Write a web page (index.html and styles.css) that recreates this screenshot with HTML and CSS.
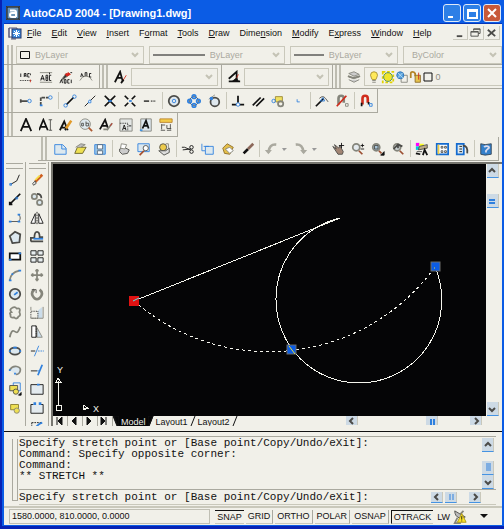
FILE: index.html
```
<!DOCTYPE html>
<html lang="en">
<head>
  <meta charset="UTF-8" />
  <meta name="viewport" content="width=device-width, initial-scale=1.0" />
  <title>AutoCAD 2004 - [Drawing1.dwg]</title>
  <link rel="stylesheet" href="styles.css">
</head>
<body>
  <div class="window">
    <header class="titlebar">
      <svg class="app-logo" viewBox="0 0 14 14"><rect width="14" height="14" fill="#d9e4ee"/><rect x="1" y="1" width="12" height="12" fill="#6d96b8"/><path d="M4 4.5h4q2 0 2 2V11M10 7H6Q4 7 4 9t2 2h4" stroke="#fff" stroke-width="2"/></svg>
      <h1>AutoCAD 2004 - [Drawing1.dwg]</h1>
      <div class="window-buttons">
        <button aria-label="Minimize"><svg viewBox="0 0 16 16"><path d="M4 12h5" stroke="#fff" stroke-width="2"/></svg></button>
        <button aria-label="Maximize"><svg viewBox="0 0 16 16"><path d="M4 5h9v8H4zM4 6h9" stroke="#fff" stroke-width="2"/></svg></button>
        <button class="close" aria-label="Close"><svg viewBox="0 0 16 16"><path d="M4 4l8 8M12 4l-8 8" stroke="#fff" stroke-width="2"/></svg></button>
      </div>
    </header>

    <div class="client">
      <nav class="menubar">
        <svg class="doc-icon" viewBox="0 0 14 14"><path d="M1 2h8v9H1z" fill="#fff" stroke="#557"/><path d="M1 2v10M3 13h5" stroke="#557"/><rect x="4" y="3" width="9" height="9" fill="#3d8ce0" stroke="#236"/><path d="M8.500 4v7M5 7.500h7M6 5l5 5M11 5l-5 5" stroke="#fff"/></svg>
        <button><u>F</u>ile</button>
        <button><u>E</u>dit</button>
        <button><u>V</u>iew</button>
        <button><u>I</u>nsert</button>
        <button>F<u>o</u>rmat</button>
        <button><u>T</u>ools</button>
        <button><u>D</u>raw</button>
        <button>Dime<u>n</u>sion</button>
        <button><u>M</u>odify</button>
        <button>E<u>x</u>press</button>
        <button><u>W</u>indow</button>
        <button><u>H</u>elp</button>
        <div class="doc-buttons">
          <button aria-label="Minimize drawing"><svg viewBox="0 0 12 12"><path d="M3 10h6" class="dk w2"/></svg></button>
          <button aria-label="Restore drawing"><svg viewBox="0 0 12 12"><path d="M4 4V2h7v5H9M1 5h8v5H1zM4 2.500h7M1 5.500h8" class="dk"/></svg></button>
          <button aria-label="Close drawing"><svg viewBox="0 0 12 12"><path d="M2 3l8 7M10 3l-8 7" class="dk w2"/></svg></button>
        </div>
      </nav>

      <!-- object properties -->
      <div class="toolbar properties">
        <span class="grip"></span>
        <div class="combo combo-color">
          <svg class="swatch" viewBox="0 0 10 8"><path d="M.5.5h9v7h-9z"/></svg>
          <select aria-label="Color"><option>ByLayer</option></select>
          <svg class="chevron" viewBox="0 0 8 6"><path d="M1 1l3 3 3-3"/></svg>
        </div>
        <div class="combo combo-linetype">
          <svg class="line-long" viewBox="0 0 52 2" preserveAspectRatio="none"><path d="M0 1h52"/></svg>
          <select aria-label="Linetype"><option>ByLayer</option></select>
          <svg class="chevron" viewBox="0 0 8 6"><path d="M1 1l3 3 3-3"/></svg>
        </div>
        <div class="combo combo-weight">
          <svg class="line-short" viewBox="0 0 30 2" preserveAspectRatio="none"><path d="M0 1h30"/></svg>
          <select aria-label="Lineweight"><option>ByLayer</option></select>
          <svg class="chevron" viewBox="0 0 8 6"><path d="M1 1l3 3 3-3"/></svg>
        </div>
        <div class="combo combo-plot">
          <select aria-label="Plot style"><option>ByColor</option></select>
          <svg class="chevron" viewBox="0 0 8 6"><path d="M1 1l3 3 3-3"/></svg>
        </div>
      </div>

      <!-- express text, styles, layers -->
      <div class="toolbar styles">
        <span class="grip"></span>
        <button class="tool" aria-label="Arc aligned text"><svg viewBox="0 0 16 16"><path d="M2 4v4M6 8V4h2v4M6 6h2M12 4h-2v4h2M13 4v2" /><path d="M1 12h14" stroke-dasharray="1 1"/><path d="M13 11v3" class="r"/></svg></button>
        <button class="tool" aria-label="Text fit"><svg viewBox="0 0 16 16"><path d="M1 3h14M1 14h14" class="g"/><path d="M2 12l2-6 2 6M2 10h4M8 6v6h2V6zM8 9h2M14 6h-2v6h2M12 3v2"/></svg></button>
        <button class="tool" aria-label="Text mask"><svg viewBox="0 0 16 16"><path d="M2 12l6-8 3 2-5 4z" class="g" fill="#333"/><path d="M7 5l4-2 2 2-4 2z" class="r" fill="#d22"/><path d="M1 15l2-4 1 4M6 11v4h2v-4zM12 11h-2v4h2M14 11v4M13 3h2"/></svg></button>
        <button class="tool" aria-label="Explode text"><svg viewBox="0 0 16 16"><path d="M1 12l3-4 4-1 4 1 3 4" class="g"/><path d="M2 8l1-4 2 4M7 7V3h2v4M14 4h-2v4h2"/></svg></button>
        <span class="edge"></span>
        <span class="grip"></span>
        <button class="tool" aria-label="Text style"><svg viewBox="0 0 16 16"><path d="M1 14L7 2l3 11M3 9h6" class="w2"/><path d="M9 14l5-8" class="r"/><path d="M8 15l3-4" class="w2"/></svg></button>
        <div class="combo combo-text">
          <select aria-label="Text style"></select>
          <svg class="chevron" viewBox="0 0 8 6"><path d="M1 1l3 3 3-3"/></svg>
        </div>
        <span class="edge"></span>
        <button class="tool" aria-label="Dimension style"><svg viewBox="0 0 16 16"><path d="M2 10l9-8v8M2 13h13" class="w2"/><path d="M9 13l4-8" class="r"/><path d="M6 13l5-4 2 4z" fill="#111"/></svg></button>
        <div class="combo combo-dim">
          <select aria-label="Dimension style"></select>
          <svg class="chevron" viewBox="0 0 8 6"><path d="M1 1l3 3 3-3"/></svg>
        </div>
        <span class="edge"></span>
        <span class="grip"></span>
        <button class="tool" aria-label="Layers"><svg viewBox="0 0 16 16"><path d="M2 4l6-2 6 3-6 2zM2 8l6 2 6-2M2 11l6 3 6-3" class="g" fill="#ccc"/><path d="M1 7l6 2 8-2" class="g w2"/></svg></button>
        <div class="layer-state">
          <svg viewBox="0 0 16 16"><path d="M5 9Q3 6 5 3q3-2 6 0 2 3 0 6l-1 2H6z" fill="#ffe95a" stroke="#a58c25"/><path d="M6 12h4M6 14h4" class="g"/></svg>
          <svg viewBox="0 0 16 16"><path d="M2 2h12v12H2z" stroke="#e2d100" stroke-dasharray="3 2" stroke-width="2"/><circle cx="8" cy="8" r="5" fill="#efe52c" stroke="#486"/></svg>
          <svg viewBox="0 0 16 16"><path d="M7 6h7v8H7z" class="g"/><circle cx="6" cy="6" r="4" fill="#5aa3df" stroke="#276eb4"/><path d="M3 3l6 6M9 3L3 9" stroke="#bde"/></svg>
          <svg viewBox="0 0 16 16"><path d="M2 9V4q0-2 2-2t3 2v3" stroke="#b48428" stroke-width="2"/><path d="M7 6h6v8H7z" fill="#e7c34c" stroke="#8a6a28"/><path d="M11 3v8" class="r"/></svg>
          <svg class="swatch" viewBox="0 0 10 10"><path d="M1 1h8v8H1z"/></svg>
          <span>0</span>
        </div>
      </div>

      <!-- object snap -->
      <div class="toolbar snaps">
        <span class="grip"></span>
        <button class="tool" aria-label="Temporary track point"><svg viewBox="0 0 16 16"><path d="M1 8h9M2 6v4" class="dk w2"/><circle cx="12" cy="8" r="2" class="b"/></svg></button>
        <button class="tool" aria-label="Snap from"><svg viewBox="0 0 16 16"><path d="M2 13V4h9" class="dk w2" stroke-dasharray="4 1"/><circle cx="13" cy="4" r="2" class="b"/><path d="M1 13h3" class="b w2"/></svg></button>
        <span class="sep"></span>
        <button class="tool" aria-label="Endpoint"><svg viewBox="0 0 16 16"><path d="M4 12l8-8" class="w2"/><circle cx="3" cy="13" r="2" class="b"/><circle cx="13" cy="3" r="2" class="b"/></svg></button>
        <button class="tool" aria-label="Midpoint"><svg viewBox="0 0 16 16"><path d="M2 14L14 2"/><path d="M7 7h2v3H6z" class="b" fill="#fff"/></svg></button>
        <button class="tool" aria-label="Intersection"><svg viewBox="0 0 16 16"><path d="M2 2l5 5v2l-5 5M14 2L9 7v2l5 5" class="w2"/><path d="M6 8h4" class="b w2"/></svg></button>
        <button class="tool" aria-label="Apparent intersection"><svg viewBox="0 0 16 16"><path d="M2 2l4 4M14 2l-4 4M2 14l4-4M10 10l4 4" class="w2"/><path d="M7 8h3" class="b w2"/></svg></button>
        <button class="tool" aria-label="Extension"><svg viewBox="0 0 16 16"><path d="M1 8h6M9 8h1M11 8h1M13 8h1" class="dk w2"/></svg></button>
        <span class="sep"></span>
        <button class="tool" aria-label="Center"><svg viewBox="0 0 16 16"><circle cx="8" cy="8" r="6" fill="#dfe8ee" class="w2 dk"/><circle cx="8" cy="8" r="2" class="b"/></svg></button>
        <button class="tool" aria-label="Quadrant"><svg viewBox="0 0 16 16"><circle cx="8" cy="8" r="5" class="dk"/><circle cx="8" cy="3" r="2" class="b w2"/><circle cx="3" cy="8" r="2" class="b w2"/><circle cx="13" cy="8" r="2" class="b w2"/><circle cx="8" cy="13" r="2" class="b w2"/></svg></button>
        <button class="tool" aria-label="Tangent"><svg viewBox="0 0 16 16"><circle cx="9" cy="9" r="5" fill="#dfe8ee" class="w2 dk"/><path d="M2 6l7-5" class="g"/><circle cx="5" cy="5" r="1" class="b w2"/></svg></button>
        <span class="sep"></span>
        <button class="tool" aria-label="Perpendicular"><svg viewBox="0 0 16 16"><path d="M8 2v8M1 12h14" class="w2"/><circle cx="8" cy="12" r="2" class="b" fill="#fff"/></svg></button>
        <button class="tool" aria-label="Parallel"><svg viewBox="0 0 16 16"><path d="M2 13l9-9M6 14l9-9" class="w2"/></svg></button>
        <button class="tool" aria-label="Insert point"><svg viewBox="0 0 16 16"><path d="M5 3h8v6H5z" fill="#f0e060" stroke="#998833"/><circle cx="3" cy="8" r="2" class="b"/><circle cx="11" cy="11" r="3" class="g w2"/></svg></button>
        <button class="tool" aria-label="Node"><svg viewBox="0 0 16 16"><path d="M7 6v3h3" class="b"/></svg></button>
        <span class="sep"></span>
        <button class="tool" aria-label="Nearest"><svg viewBox="0 0 16 16"><path d="M1 14l9-9" class="w2"/><path d="M5 5q4-4 7 0t3 4" class="dk"/><path d="M6 8h5l-2-4z" class="b"/></svg></button>
        <button class="tool" aria-label="Snap to none"><svg viewBox="0 0 16 16"><path d="M4 12V5q0-3 3-3t3 3v5" class="g w3"/><path d="M2 14L13 2" class="r w2"/><path d="M12 11h3v3h-3z" class="g"/></svg></button>
        <span class="sep"></span>
        <button class="tool" aria-label="Osnap settings"><svg viewBox="0 0 16 16"><path d="M4 12V5q0-3 3-3t3 3v5" class="r w3"/><path d="M3 10v4M11 9v3" class="w2"/><path d="M12 11h3v3h-3z" class="b"/></svg></button>
        <span class="edge"></span>
      </div>

      <!-- text -->
      <div class="toolbar text-tools">
        <span class="grip"></span>
        <button class="tool" aria-label="Multiline text"><svg viewBox="0 0 16 16"><path d="M2 15L8 1l6 14M4 10h8" class="w2"/></svg></button>
        <button class="tool" aria-label="Single line text"><svg viewBox="0 0 16 16"><path d="M0 14L5 2l5 12M2 10h6" class="w2"/><path d="M11 2h4M13 2v12M11 14h4" class="dk"/></svg></button>
        <button class="tool" aria-label="Edit text"><svg viewBox="0 0 16 16"><path d="M1 14L6 4l4 10M3 11h6" class="w2"/><path d="M8 12l6-9" stroke="#e29a28" stroke-width="3"/><path d="M7 14l1-2" class="w2"/></svg></button>
        <button class="tool" aria-label="Find and replace"><svg viewBox="0 0 16 16"><circle cx="7" cy="7" r="6" fill="#dfe8ee" class="g"/><path d="M3 6h2v3H3zM8 4v5h3V6H8" class="dk"/><path d="M11 11l4 4" stroke="#ad5a32" stroke-width="2"/></svg></button>
        <button class="tool" aria-label="Text style manager"><svg viewBox="0 0 16 16"><path d="M1 13L7 2l3 9M3 9h6" class="w2"/><path d="M9 14l6-8M5 13h4" class="g w2"/><path d="M13 9l2-3" class="r"/></svg></button>
        <button class="tool" aria-label="Scale text"><svg viewBox="0 0 16 16"><path d="M1 1h14v14H1z" class="g" fill="#e3e6e4"/><path d="M1 6h9v9" stroke-dasharray="1 1"/><path d="M4 14l2-6 2 6M5 12h3M11 9h3"/></svg></button>
        <button class="tool" aria-label="Justify text"><svg viewBox="0 0 16 16"><path d="M2 1h12v14H2z" class="g" fill="#dce5ec"/><path d="M4 12l4-9 3 9M6 9h4" class="w2"/><path d="M1 13h3v2H1z" fill="#4593dd" stroke="none"/></svg></button>
        <button class="tool" aria-label="Convert distance"><svg viewBox="0 0 16 16"><path d="M1 1h14v4H1z" fill="#f3cb48" stroke="#b9822d"/><path d="M3 7v6M13 7v6M3 8h4M9 8v4h5M2 14h5M9 14h5" class="dk"/></svg></button>
        <span class="edge"></span>
      </div>

      <!-- standard -->
      <div class="toolbar standard">
        <span class="grip"></span>
        <button class="tool" aria-label="New"><svg viewBox="0 0 16 16"><path d="M2 3h9l4 4v7H2z" fill="#dce8ef" class="b"/><path d="M10 3v5h5" class="b"/></svg></button>
        <button class="tool" aria-label="Open"><svg viewBox="0 0 16 16"><path d="M2 13l3-7h10l-4 7z" fill="#eee052" stroke="#655e28"/><path d="M3 6l6-4 5 1-5 3" fill="#bbb" class="g"/></svg></button>
        <button class="tool" aria-label="Save"><svg viewBox="0 0 16 16"><path d="M2 3h12v11H2z" fill="#9bc8ec" class="b"/><path d="M5 3h6v5H5zM5 10h6v4H5z" fill="#fff" stroke="#567"/></svg></button>
        <span class="sep"></span>
        <button class="tool" aria-label="Plot"><svg viewBox="0 0 16 16"><path d="M3 8l5-2 6 3-2 4-6 1-3-3z" fill="#ccc" class="dk"/><path d="M5 2l6 1-2 5-5-1z" fill="#fff" class="g"/></svg></button>
        <button class="tool" aria-label="Plot preview"><svg viewBox="0 0 16 16"><path d="M1 2h13v9H1z" fill="#dce8ef" class="b"/><circle cx="10" cy="7" r="3" fill="#fff" class="dk"/><path d="M8 10l-5 5" stroke="#a64e2b" stroke-width="2"/></svg></button>
        <button class="tool" aria-label="Publish"><svg viewBox="0 0 16 16"><circle cx="7" cy="6" r="4" fill="#edcb4d" class="dk"/><path d="M2 10h8l4-3v5l-6 3z" fill="#ddd" class="dk"/><path d="M10 2h3v5" class="g"/></svg></button>
        <span class="sep"></span>
        <button class="tool" aria-label="Cut"><svg viewBox="0 0 16 16"><path d="M1 6h3l7 3M2 9l9-1"/><circle cx="12" cy="6" r="2"/><circle cx="12" cy="11" r="2"/></svg></button>
        <button class="tool" aria-label="Copy"><svg viewBox="0 0 16 16"><path d="M1 10V2M1 10h4V5h9v9H5v-4M3 5h6" class="b" fill="#dce8ef"/></svg></button>
        <button class="tool" aria-label="Paste"><svg viewBox="0 0 16 16"><path d="M2 7l5-5 7 4-4 8-6-1z" fill="#e4bf4a" stroke="#8a6a28"/><path d="M5 8l5-2 4 4-4 3z" fill="#fff" class="g"/></svg></button>
        <button class="tool" aria-label="Match properties"><svg viewBox="0 0 16 16"><path d="M3 13l5-5" class="w3"/><path d="M8 8l6-6" stroke="#8c685a" stroke-width="3"/></svg></button>
        <span class="sep tight"></span>
        <button class="tool" aria-label="Undo"><svg viewBox="0 0 16 16"><path d="M14 3q-8-1-9 9" class="lg w3"/><path d="M1 9h8l-4 5z" fill="#aaa99f" stroke="none"/></svg></button>
        <button class="drop" aria-label="Undo list"><svg viewBox="0 0 6 4"><path d="M1 1h5L3 4z" fill="#999" stroke="none"/></svg></button>
        <button class="tool" aria-label="Redo"><svg viewBox="0 0 16 16"><path d="M2 3q8-1 9 9" class="lg w3"/><path d="M7 9h8l-4 5z" fill="#aaa99f" stroke="none"/></svg></button>
        <button class="drop" aria-label="Redo list"><svg viewBox="0 0 6 4"><path d="M1 1h5L3 4z" fill="#999" stroke="none"/></svg></button>
        <span class="sep blank"></span>
        <button class="tool" aria-label="Pan"><svg viewBox="0 0 16 16"><path d="M2 5l4 3-2-5 5 4 1-3 4 7-1 3H8z" fill="#a28574" class="dk"/><path d="M12 1v6M9 4h6"/></svg></button>
        <button class="tool" aria-label="Zoom realtime"><svg viewBox="0 0 16 16"><circle cx="6" cy="6" r="4" fill="#e3e9ed" class="g w2"/><path d="M9 10l4 4" stroke="#9b4f32" stroke-width="2"/><path d="M11 4h4M13 2v4M11 8h4"/></svg></button>
        <button class="tool" aria-label="Zoom window"><svg viewBox="0 0 16 16"><circle cx="6" cy="6" r="4" fill="#a8c4d8" class="g w2"/><path d="M4 4h4v4H4z" class="dk"/><path d="M9 10l3 3" stroke="#9b4f32" stroke-width="2"/><path d="M15 11v4h-4z" fill="#111"/></svg></button>
        <button class="tool" aria-label="Zoom previous"><svg viewBox="0 0 16 16"><circle cx="7" cy="6" r="4" fill="#cbd2d3" class="g w2"/><path d="M10 10l4 4" stroke="#9b4f32" stroke-width="2"/><path d="M3 8l5-5 5 2M8 3v4" class="dk w2"/></svg></button>
        <span class="sep"></span>
        <button class="tool" aria-label="Properties"><svg viewBox="0 0 16 16"><path d="M1 1h4v4H1z" fill="#f0f" stroke="none"/><path d="M5 2h5v3H5z" fill="#ff2" stroke="none"/><path d="M1 5h4v4H1z" fill="#0cd" stroke="none"/><path d="M5 5l9-2v4L4 9zM2 11h6" class="dk" fill="#ba8"/><path d="M1 13l5 1M9 15l2-6 3 6" class="w2"/></svg></button>
        <button class="tool" aria-label="DesignCenter"><svg viewBox="0 0 16 16"><path d="M2 2h13v12H2z" fill="#fff" stroke="#146bd0" stroke-width="2"/><path d="M4 3v11" stroke="#ec4" stroke-width="2"/><path d="M7 5h2v2H7zM11 5h2v2h-2zM7 10h2v2H7zM11 10h2v2h-2z" class="dk"/></svg></button>
        <button class="tool" aria-label="Tool palettes"><svg viewBox="0 0 16 16"><path d="M2 2h8v12H2z" fill="#dce8ef" stroke="#146bd0" stroke-width="2"/><path d="M5 5h3M5 8h3M5 11h3"/><path d="M9 4q6 0 5 9" class="dk w2"/></svg></button>
        <span class="sep"></span>
        <button class="tool" aria-label="Help"><svg viewBox="0 0 16 16"><path d="M2 2l5 1 7-1v12l-7 1-5-1z" fill="#3480cb" stroke="#345"/><path d="M6 6q1-2 4-1t0 3l-2 2v2" stroke="#dde" stroke-width="2"/></svg></button>
        <span class="edge"></span>
      </div>

      <main class="work">
        <div class="side-toolbar">
          <span class="grip-h"></span>
          <button class="tool" aria-label="Line"><svg viewBox="0 0 16 16"><path d="M3 13l7-4 3-7" /><path d="M2 12h2v2H2z" class="b"/></svg></button>
          <button class="tool" aria-label="Construction line"><svg viewBox="0 0 16 16"><path d="M2 14L14 2M2 11v3h3" class="w2"/><path d="M9 6h2v2H9z" class="b"/></svg></button>
          <button class="tool" aria-label="Polyline"><svg viewBox="0 0 16 16"><path d="M2 12h10q4-4 0-8" class="dk"/><path d="M1 12h3M11 12h3M11 4h3" class="b w2"/></svg></button>
          <button class="tool" aria-label="Polygon"><svg viewBox="0 0 16 16"><path d="M2 7l6-5 6 3-1 9-8 1z" fill="#dce8ef" class="dk w2"/></svg></button>
          <button class="tool" aria-label="Rectangle"><svg viewBox="0 0 16 16"><path d="M2 5h12v7H2z" fill="#fff" class="w2"/><path d="M1 12h3M12 5h3" class="b w2"/></svg></button>
          <button class="tool" aria-label="Arc"><svg viewBox="0 0 16 16"><path d="M2 14Q3 5 13 3" class="g w2"/><path d="M1 14h3M4 7h2M12 3h3" class="b w2"/></svg></button>
          <button class="tool" aria-label="Circle"><svg viewBox="0 0 16 16"><circle cx="8" cy="8" r="6" fill="#dce8ef" class="w2 dk"/><path d="M7 9l4-3" class="b w2"/></svg></button>
          <button class="tool" aria-label="Revision cloud"><svg viewBox="0 0 16 16"><path d="M4 7Q1 4 5 2q3-2 5 1 5-1 3 4 2 4-1 5-2 4-5 1-5 1-4-3-2-2 1-3z" class="g w2"/></svg></button>
          <button class="tool" aria-label="Spline"><svg viewBox="0 0 16 16"><path d="M2 14q2-9 5-7t4 1 3-6" class="g w2"/></svg></button>
          <button class="tool" aria-label="Ellipse"><svg viewBox="0 0 16 16"><ellipse cx="8" cy="8" rx="6" ry="4" fill="#dce8ef" class="w2 dk"/><path d="M6 4h4M1 8h2M13 8h2" class="b w2"/></svg></button>
          <button class="tool" aria-label="Ellipse arc"><svg viewBox="0 0 16 16"><path d="M2 8q2-5 8-4t3 7-7 0z" fill="#dce8ef" stroke="none"/><path d="M2 8q3-5 8-4t4 5-5 4" class="g w2"/><path d="M1 8h2M7 12h2" class="b w2"/></svg></button>
          <button class="tool" aria-label="Insert block"><svg viewBox="0 0 16 16"><path d="M6 1h8v9H6z" class="b"/><path d="M2 4h9v6H2z" fill="#eedf52" class="dk"/><circle cx="9" cy="11" r="3" fill="#eedf52" class="dk"/><path d="M15 12v3h-3z" fill="#111"/></svg></button>
          <button class="tool" aria-label="Make block"><svg viewBox="0 0 16 16"><path d="M3 4h9v6H3z" fill="#eedf52" stroke="#887b2c"/><circle cx="10" cy="11" r="3" fill="#eedf52" class="g"/></svg></button>
          <button class="tool" aria-label="Point"><svg viewBox="0 0 16 16"><path d="M7 8h3" class="b w2"/></svg></button>
        </div>
        <div class="side-toolbar">
          <span class="grip-h"></span>
          <button class="tool" aria-label="Erase"><svg viewBox="0 0 16 16"><path d="M6 10l8-8" stroke="#ce5f20" stroke-width="3"/><path d="M6 8l5-5" stroke="#f6df4b" stroke-width="2"/><path d="M3 12l3-3 1 3-3 2z" fill="#ddd" class="dk"/></svg></button>
          <button class="tool" aria-label="Copy object"><svg viewBox="0 0 16 16"><circle cx="5" cy="5" r="3" fill="#dce8ef" class="g w2"/><circle cx="11" cy="12" r="3" fill="#dce8ef" class="g w2"/><path d="M8 2q5 0 5 5" class="w2 dk"/></svg></button>
          <button class="tool" aria-label="Mirror"><svg viewBox="0 0 16 16"><path d="M6 3v11H1zM10 3v11h5z" fill="#fff"/><path d="M8 1v14" stroke-dasharray="2 1"/></svg></button>
          <button class="tool" aria-label="Offset"><svg viewBox="0 0 16 16"><path d="M1 13h14M1 13V9h4q0-7 3-7t3 6h4" class="dk w2"/><path d="M4 10h11" class="b w2"/></svg></button>
          <button class="tool" aria-label="Array"><svg viewBox="0 0 16 16"><path d="M1 2h6v5H1zM9 2h6v5H9zM1 10h6v5H1zM9 10h6v5H9z" fill="#e7edef"/></svg></button>
          <button class="tool" aria-label="Move"><svg viewBox="0 0 16 16"><path d="M8 1v14M1 8h14M6 3h4M6 13h4M3 6v4M13 6v4" class="g w2"/></svg></button>
          <button class="tool" aria-label="Rotate"><svg viewBox="0 0 16 16"><path d="M5 3q-4 3-2 7t5 4 5-4-2-7" class="g w3"/><path d="M2 3h5v4" class="dk"/></svg></button>
          <button class="tool" aria-label="Scale"><svg viewBox="0 0 16 16"><path d="M9 5l5-4v13H9z" fill="#cbdcea" stroke="none"/><path d="M1 6h8v8H1z" stroke-dasharray="1 1"/><path d="M1 1v4M1 14h14V1" class="g"/></svg></button>
          <button class="tool" aria-label="Stretch"><svg viewBox="0 0 16 16"><path d="M8 3l6 11H8z" fill="#cbdcea" class="g"/><path d="M2 1h5v13H2z" fill="#fff"/><path d="M7 1v13" stroke-dasharray="1 1"/></svg></button>
          <button class="tool" aria-label="Trim"><svg viewBox="0 0 16 16"><path d="M1 8h5"/><path d="M10 2L5 14" class="b"/><path d="M9 8h7" class="b" stroke-dasharray="2 1"/></svg></button>
          <button class="tool" aria-label="Extend"><svg viewBox="0 0 16 16"><path d="M1 9h7"/><path d="M14 2L9 14" class="b w2"/><path d="M8 9h3" class="b"/></svg></button>
          <button class="tool" aria-label="Break at point"><svg viewBox="0 0 16 16"><path d="M1 3h14v11H1z" fill="#e3eaee"/><path d="M8 3h3" class="b w2"/></svg></button>
          <button class="tool" aria-label="Break"><svg viewBox="0 0 16 16"><path d="M4 4H1v10h14V4h-3" fill="#e3eaee"/><path d="M4 3h3M10 3h3" class="b w3"/></svg></button>
          <button class="tool" aria-label="Chamfer"><svg viewBox="0 0 16 16"><path d="M2 3h12M2 3v11" stroke-dasharray="2 1"/><path d="M4 14q2-8 10-11" class="b w2"/></svg></button>
        </div>

        <section class="viewport">
          <div class="canvas-row">
            <svg class="drawing" viewBox="53 164 433 252" preserveAspectRatio="xMinYMax meet">
              <path class="line" d="M134 301L340 218"/>
              <path class="line" d="M340 218A83 83 0 0 0 276 300A83 83 0 0 0 359 383A83 83 0 0 0 435 267"/>
              <path class="line rubber" d="M134 301A205 205 0 0 0 435 267"/>
              <!-- grips -->
              <rect x="129" y="296" width="10" height="10" fill="#e01212" stroke="none"/>
              <path d="M133 301l6-3" stroke="#5ce0e8"/>
              <rect class="grip-mark" x="287" y="345" width="9" height="9"/>
              <path d="M289 346l6 8" stroke="#e8dc3a"/>
              <rect class="grip-mark" x="431" y="262" width="9" height="9"/>
              <path d="M434 268h1" stroke="#e8dc3a"/>
              <!-- UCS icon -->
              <path class="line" d="M56 405h5v5h-5zM58 405v-24M56 382l2-4 3 4zM83 405v5l5-2zM84 408h5"/>
              <text x="57" y="373">Y</text>
              <text x="93" y="412">X</text>
            </svg>
            <div class="scroll-v">
              <button class="sb" aria-label="Scroll up"><svg viewBox="0 0 10 10"><path d="M2 6l3-3 3 3" class="dk w2"/></svg></button>
              <button class="sb thumb" aria-label="Scroll position"><svg viewBox="0 0 10 10"><path d="M2 4h6M2 7h6" class="b w2"/></svg></button>
              <button class="sb last" aria-label="Scroll down"><svg viewBox="0 0 10 10"><path d="M2 4l3 3 3-3" class="dk w2"/></svg></button>
            </div>
          </div>
          <div class="tab-row">
            <button class="nav" aria-label="First tab"><svg viewBox="0 0 10 8"><path d="M3 0v8M8 0v8L4 4z" fill="#111"/></svg></button>
            <button class="nav" aria-label="Previous tab"><svg viewBox="0 0 10 8"><path d="M7 0v8L3 4z" fill="#111"/></svg></button>
            <button class="nav" aria-label="Next tab"><svg viewBox="0 0 10 8"><path d="M3 0v8l4-4z" fill="#111"/></svg></button>
            <button class="nav" aria-label="Last tab"><svg viewBox="0 0 10 8"><path d="M2 0v8l4-4zM7 0v8" fill="#111"/></svg></button>
            <svg class="slash" viewBox="0 0 6 10"><path d="M0 0l4 10h2V0z" fill="#050506"/><path d="M1 0l4 10"/></svg>
            <button class="tab active">Model</button>
            <svg class="slash" viewBox="0 0 6 10"><path d="M0 0h5L1 10H0z" fill="#050506"/><path d="M5 0L1 10"/></svg>
            <button class="tab">Layout1</button>
            <svg class="slash" viewBox="0 0 6 10"><path d="M5 0L1 10"/></svg>
            <button class="tab">Layout2</button>
            <svg class="slash" viewBox="0 0 6 10"><path d="M5 0L1 10"/></svg>
            <div class="scroll-h">
              <button class="sb" aria-label="Scroll left"><svg viewBox="0 0 10 10"><path d="M6 2L3 5l3 3" class="dk w2"/></svg></button>
              <button class="sb thumb" aria-label="Scroll position"><svg viewBox="0 0 10 10"><path d="M4 3v6M7 3v6" class="b w2"/></svg></button>
              <button class="sb" aria-label="Scroll right"><svg viewBox="0 0 10 10"><path d="M4 2l3 3-3 3" class="dk w2"/></svg></button>
            </div>
          </div>
        </section>
      </main>

      <section class="command">
        <span class="command-grip"></span>
        <div class="command-body">
          <div class="history">
            <div class="history-lines">
              <p>Specify stretch point or [Base point/Copy/Undo/eXit]:</p>
              <p>Command: Specify opposite corner:</p>
              <p>Command:</p>
              <p>** STRETCH **</p>
            </div>
            <div class="scroll-v">
              <button class="sb" aria-label="Scroll up"><svg viewBox="0 0 10 10"><path d="M2 6l3-3 3 3" class="dk w2"/></svg></button>
              <button class="sb last" aria-label="Scroll position"><svg viewBox="0 0 10 10"><path d="M3 1h5M3 3h5M3 5h5M3 7h5" class="b"/></svg></button>
              <button class="sb" aria-label="Scroll down"><svg viewBox="0 0 10 10"><path d="M2 4l3 3 3-3" class="dk w2"/></svg></button>
            </div>
          </div>
          <div class="prompt">
            <label for="command-line">Specify stretch point or [Base point/Copy/Undo/eXit]:</label>
            <input id="command-line" type="text" />
            <button class="sb" aria-label="Scroll left"><svg viewBox="0 0 10 10"><path d="M6 2L3 5l3 3" class="dk w2"/></svg></button>
            <button class="sb" aria-label="Scroll position"><svg viewBox="0 0 10 10"><path d="M4 2v6M7 2v6" class="b"/></svg></button>
            <button class="sb right" aria-label="Scroll right"><svg viewBox="0 0 10 10"><path d="M4 2l3 3-3 3" class="dk w2"/></svg></button>
          </div>
        </div>
      </section>

      <footer class="statusbar">
        <output class="coords">1580.0000, 810.0000, 0.0000</output>
        <button class="pressed">SNAP</button>
        <button>GRID</button>
        <button>ORTHO</button>
        <button>POLAR</button>
        <button>OSNAP</button>
        <button class="pressed boxed">OTRACK</button>
        <button class="flat">LW</button>
        <svg class="comm" viewBox="0 0 16 16"><path d="M2 1q0 6 5 8t7-1z" fill="#bbb" class="dk"/><path d="M8 5l4-4M5 9l-3 6h7" class="g w2"/><path d="M10 4l5 10H5z" fill="#fbe32b" stroke="#a89413"/><path d="M10 7v4M10 12v1"/></svg>
        <button class="tray" aria-label="Tray menu"><svg viewBox="0 0 8 5"><path d="M0 0h8L4 4z" fill="#111" stroke="none"/></svg></button>
      </footer>
    </div>
  </div>
</body>
</html>
```
FILE: styles.css
```
* {
  box-sizing: border-box;
}
body {
  margin: 0;
  background: #0722b4;
  color: #111;
  font-family: "Liberation Sans", Arial, sans-serif;
  font-size: 9px;
}
button {
  font: inherit;
  color: inherit;
  background: none;
  border: none;
  padding: 0;
  flex: none;
}
svg {
  display: block;
  flex: none;
  fill: none;
  stroke: #111;
}
/* stroke colours and weights shared by the icons */
.b { stroke: #2f80de; }
.g { stroke: #85857b; }
.lg { stroke: #aaa99f; }
.r { stroke: #d02c1c; }
.dk { stroke: #4b4b48; }
.w2 { stroke-width: 2; }
.w3 { stroke-width: 3; }

.window {
  display: flex;
  flex-direction: column;
  height: 100vh;
  border-left: 2px solid #0722b4;
  border-bottom: 3px solid #0722b4;
  background: #0b5ce5;
  padding: 0 2px 1px 2px;
}
.titlebar {
  display: flex;
  align-items: center;
  height: 24px;
  flex: none;
  padding: 3px 1px 0 2px;
  border-bottom: 1px solid #0636b8;
}
.app-logo {
  width: 14px;
  height: 14px;
}
.titlebar h1 {
  margin: 0 auto 0 3px;
  color: #fff;
  font-size: 11px;
}
.window-buttons {
  display: flex;
  gap: 2px;
}
.window-buttons button {
  width: 18px;
  height: 18px;
  border: 1px solid #dfe9f8;
  border-radius: 3px;
  background: #2d7fe6;
}
.window-buttons .close {
  background: #c8593a;
}
.window-buttons svg {
  width: 16px;
  height: 16px;
}
.client {
  flex: 1;
  min-height: 0;
  display: flex;
  flex-direction: column;
  background: #f1f0e9;
}

.menubar {
  display: flex;
  align-items: center;
  gap: 10px;
  height: 21px;
  flex: none;
  padding: 0 2px 3px 4px;
}
.doc-icon {
  width: 14px;
  height: 14px;
  margin-right: -5px;
}
.doc-buttons {
  display: flex;
  gap: 1px;
  margin-left: auto;
}
.doc-buttons button {
  width: 15px;
  height: 14px;
  padding: 1px;
  border-right: 1px solid #c9c8bd;
  border-bottom: 1px solid #c9c8bd;
}
.doc-buttons svg {
  width: 11px;
  height: 11px;
}

.toolbar {
  display: flex;
  align-items: center;
  height: 24px;
  flex: none;
  padding-left: 3px;
  border-bottom: 1px solid #aaa99f;
}
.grip {
  flex: none;
  align-self: stretch;
  width: 6px;
  margin-right: 3px;
  border-left: 2px solid #bdbcb1;
  border-right: 2px solid #bdbcb1;
}
.sep {
  flex: none;
  width: 1px;
  height: 17px;
  margin: 0 1px 0 2px;
  background: #c9c8bb;
}
.sep.tight {
  margin: 0 1px;
}
.sep.blank {
  margin: 0 3px;
  background: none;
}
.edge {
  flex: none;
  align-self: stretch;
  width: 2px;
  margin: 0 3px;
  border-right: 1px solid #aaa99f;
}
.tool {
  display: flex;
  align-items: center;
  justify-content: center;
  width: 20px;
  height: 19px;
}
.tool svg {
  width: 14px;
  height: 14px;
}
.drop {
  width: 10px;
}
.drop svg {
  width: 6px;
  height: 4px;
}

.combo {
  display: flex;
  align-items: center;
  min-width: 0;
  height: 18px;
  padding: 0 4px 0 3px;
  border: 1px solid #c9c8bb;
  color: #aaa99f;
}
.combo select {
  appearance: none;
  flex: 1;
  min-width: 0;
  padding: 0 0 0 5px;
  border: none;
  background: none;
  color: inherit;
  font: inherit;
}
.chevron {
  width: 8px;
  height: 6px;
  stroke: #c4c3b5;
  stroke-width: 2;
}
.properties {
  height: 20px;
  gap: 5px;
}
.properties .grip {
  margin-right: -2px;
}
.combo-color { flex: 128; }
.combo-linetype { flex: 137; }
.combo-weight { flex: 107; }
.combo-plot { flex: 97; }
.swatch {
  width: 10px;
  height: 8px;
}
.line-long {
  width: 52px;
  height: 2px;
}
.line-short {
  width: 30px;
  height: 2px;
}
.combo-text { flex: 86; }
.combo-dim { flex: 84; }
.layer-state {
  flex: 150;
  display: flex;
  align-items: center;
  height: 19px;
  padding-left: 2px;
  border: 1px solid #c9c8bb;
  border-right: none;
  color: #8d8c82;
}
.layer-state svg {
  width: 14px;
  height: 14px;
}
.layer-state .swatch {
  width: 10px;
  height: 10px;
  margin-right: 3px;
}
.styles .edge {
  margin: 0 2px;
}
.snaps,
.text-tools {
  align-self: flex-start;
}
.snaps .edge,
.text-tools .edge {
  margin: 0;
}
.standard {
  margin: 0 3px 0 34px;
}
.standard .edge {
  margin: 0 0 0 auto;
}

.work {
  flex: 1;
  min-height: 0;
  display: flex;
  margin-top: 1px;
}
.side-toolbar {
  display: flex;
  flex-direction: column;
  align-items: center;
  width: 22px;
  flex: none;
  overflow: hidden;
  border-right: 1px solid #aaa99f;
}
.side-toolbar + .side-toolbar {
  width: 23px;
}
.side-toolbar .tool {
  flex: none;
}
.grip-h {
  flex: none;
  width: 17px;
  height: 6px;
  margin: 1px 0;
  border-top: 1px solid #aaa99f;
  border-bottom: 1px solid #aaa99f;
}
.viewport {
  flex: 1;
  min-width: 0;
  display: flex;
  flex-direction: column;
  margin-left: 2px;
  border-left: 2px solid #77766f;
  border-top: 2px solid #77766f;
}
.canvas-row {
  flex: 1;
  min-height: 0;
  display: flex;
}
.drawing {
  flex: 1;
  min-width: 0;
  height: 100%;
  background: #050506;
}
.drawing .line {
  stroke: #f4f4ec;
  shape-rendering: crispEdges;
}
.drawing .rubber {
  stroke-dasharray: 3 3;
}
.drawing text {
  fill: #f4f4ec;
  stroke: none;
  font-size: 9px;
}
.grip-mark {
  fill: #0b5ce5;
  stroke: #6d6d68;
}

.scroll-v {
  display: flex;
  flex-direction: column;
  align-items: center;
  width: 16px;
  flex: none;
  padding-right: 3px;
}
.sb {
  display: flex;
  align-items: center;
  justify-content: center;
  width: 12px;
  height: 14px;
  border-right: 1px solid #c9c8bb;
  border-bottom: 1px solid #4593e2;
  background: #cddae5;
}
.sb svg {
  width: 10px;
  height: 10px;
}
.scroll-v .thumb {
  margin-top: 16px;
}
.scroll-v .last {
  margin-top: auto;
}
.tab-row {
  display: flex;
  height: 10px;
  flex: none;
  overflow: hidden;
}
.nav {
  width: 15px;
  border-right: 1px solid #aaa99f;
}
.nav svg {
  width: 10px;
  height: 8px;
  margin-left: 1px;
}
.slash {
  width: 6px;
  height: 10px;
}
.active {
  background: #050506;
  color: #f1f0e9;
}
.tab {
  height: 12px;
  padding: 0 2px;
}
.scroll-h {
  flex: 1;
  display: flex;
  max-width: 246px;
  margin-left: auto;
  padding: 0 20px 0 90px;
  justify-content: space-between;
}
.scroll-h .sb {
  height: 9px;
  border-bottom: none;
}
.scroll-h .thumb {
  margin-left: 36px;
}

.command {
  display: flex;
  flex: none;
  gap: 1px;
  margin-top: 5px;
  padding: 4px 6px 1px 8px;
  border-top: 1px solid #111;
  font-family: "Liberation Mono", "Courier New", monospace;
  font-size: 11px;
}
.command-grip {
  width: 6px;
  margin: 3px 0 4px;
  border: 1px solid #aaa99f;
  border-top: none;
}
.command-body {
  flex: 1;
  min-width: 0;
}
.history {
  display: flex;
  height: 54px;
  padding-top: 1px;
  border-top: 1px solid #aaa99f;
  border-bottom: 1px solid #aaa99f;
}
.history-lines {
  flex: 1;
  min-width: 0;
  white-space: nowrap;
}
.history p {
  margin: 0;
  line-height: 11px;
}
.history .scroll-v {
  padding: 0;
}
.prompt {
  display: flex;
  align-items: center;
  height: 15px;
  border-bottom: 1px solid #c9c8bb;
  white-space: nowrap;
}
.prompt input {
  flex: 1;
  min-width: 0;
  height: 13px;
  padding: 0;
  border: none;
  background: none;
  font: inherit;
}
.prompt .sb {
  height: 11px;
  margin-right: 2px;
}
.prompt .right {
  margin: 0 15px 0 10px;
}

.statusbar {
  display: flex;
  align-items: center;
  gap: 2px;
  height: 19px;
  flex: none;
  padding: 1px 12px 1px 5px;
  border-top: 2px solid #c9c8bb;
}
.coords {
  flex: 1;
  min-width: 0;
  height: 15px;
  margin-right: 3px;
  padding-left: 2px;
  border: 1px solid #c0bfb4;
  line-height: 13px;
}
.statusbar button {
  height: 14px;
  padding: 0 2px;
  border-right: 1px solid #aaa99f;
  border-bottom: 1px solid #c9c8bb;
}
.statusbar .pressed {
  border-top: 1px solid #111;
  border-right: none;
}
.statusbar .boxed {
  border-left: 1px solid #111;
}
.statusbar .flat {
  padding: 0 0 0 2px;
  border: none;
}
.comm {
  width: 16px;
  height: 14px;
}
.statusbar .tray {
  margin-left: 8px;
  border: none;
}
.tray svg {
  width: 8px;
  height: 5px;
}
```
